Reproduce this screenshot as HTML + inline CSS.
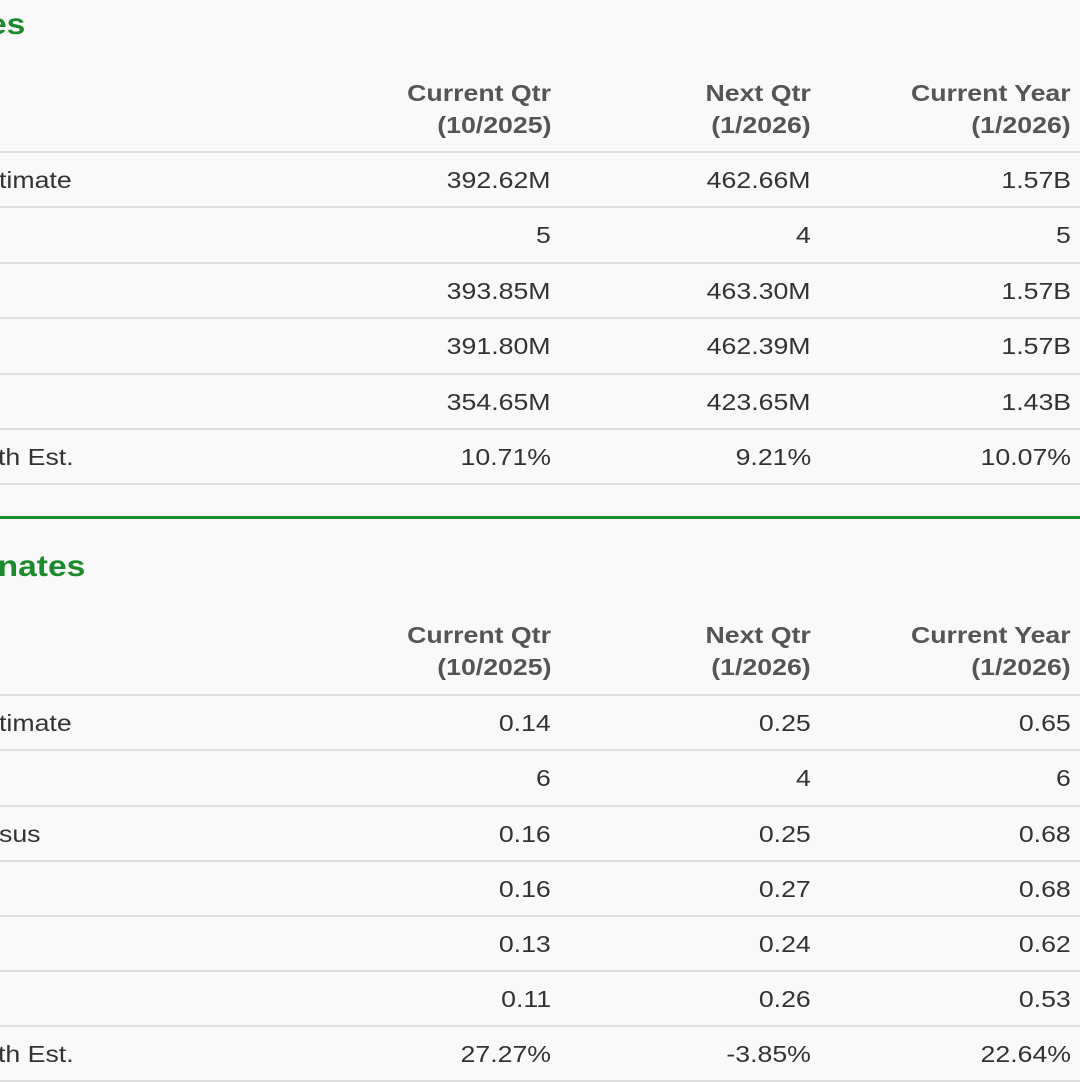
<!DOCTYPE html>
<html><head><style>
body{margin:0;width:1080px;height:1080px;background:#f9f9f9;overflow:hidden;position:relative;font-family:"Liberation Sans",sans-serif;color:#333}
.h{position:absolute;font-weight:bold;font-size:30px;color:#1e8a2e;line-height:1;transform:scaleX(1.12);transform-origin:right center}
.line{position:absolute;left:0;width:1080px;height:2px;background:#dedede}
.g{position:absolute;left:0;width:1080px;height:3px;background:#1e8a2e;top:516px}
.t{position:absolute;font-size:23px;line-height:32px;white-space:nowrap;transform:scaleX(1.16);transform-origin:left center}
.r{transform-origin:right center}
.hd{font-weight:bold;color:#555}
</style></head><body>
<div class="h" style="right:1055px;top:10px">es</div>
<div class="h" style="right:995px;top:552px">nates</div>
<div class="g"></div>
<div id="c"></div>
<script>
var c=document.getElementById('c'),h='';
function t(x,y,s,cls,right){h+='<div class="t '+(cls||'')+(right?' r':'')+'" style="'+(right?'right:'+(1080-x)+'px':'left:'+x+'px')+';top:'+(y-16)+'px">'+s+'</div>';}
function sec(top,lines,labels,rows){
 var cols=[551,811,1071];
 var hd=[['Current Qtr','(10/2025)'],['Next Qtr','(1/2026)'],['Current Year','(1/2026)']];
 for(var i=0;i<3;i++){t(cols[i],top,hd[i][0],'hd',1);t(cols[i],top+32,hd[i][1],'hd',1);}
 lines.forEach(function(y){h+='<div class="line" style="top:'+(y-1)+'px"></div>';});
 for(var r=0;r<rows.length;r++){var cy=(lines[r]+lines[r+1])/2;
  if(labels[r])t(labels[r][1],cy,labels[r][0]);
  for(var i=0;i<3;i++)t(cols[i],cy,rows[r][i],'',1);}
}
sec(93,[152,207,263,318,374,429,484],[['timate',-1],null,null,null,null,['th Est.',-2]],
[['392.62M','462.66M','1.57B'],['5','4','5'],['393.85M','463.30M','1.57B'],['391.80M','462.39M','1.57B'],['354.65M','423.65M','1.43B'],['10.71%','9.21%','10.07%']]);
sec(635,[695,750,806,861,916,971,1026,1081],[['timate',-1],null,['sus',-1],null,null,null,['th Est.',-2]],
[['0.14','0.25','0.65'],['6','4','6'],['0.16','0.25','0.68'],['0.16','0.27','0.68'],['0.13','0.24','0.62'],['0.11','0.26','0.53'],['27.27%','-3.85%','22.64%']]);
c.innerHTML=h;
</script>
</body></html>
